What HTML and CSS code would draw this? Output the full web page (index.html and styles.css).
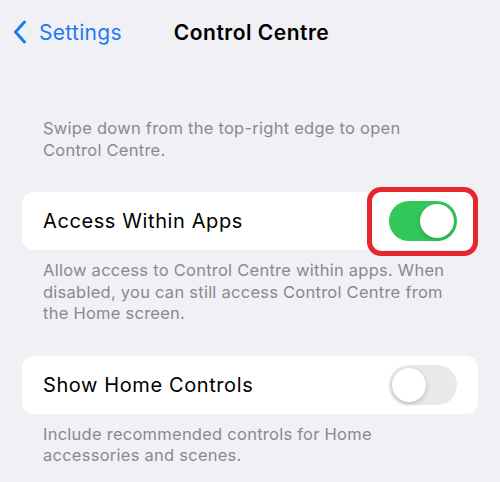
FILE: index.html
```html
<!DOCTYPE html>
<html lang="en">
<head>
    <meta charset="UTF-8">
    <meta name="viewport" content="width=device-width, initial-scale=1.0">
    <title>Control Centre</title>
    <link rel="stylesheet" href="styles.css">
</head>
<body>
    <div class="nav-bar">
        <div class="back-link">
            <svg class="chevron" width="14" height="24" viewBox="0 0 14 24">
                <path d="M11.5 2 L2.5 12 L11.5 22" fill="none" stroke="#1a7cf3" stroke-width="3" stroke-linecap="round" stroke-linejoin="round"/>
            </svg>
            <span>Settings</span>
        </div>
        <div class="nav-title">Control Centre</div>
    </div>

    <p class="group-footer first">Swipe down from the top-right edge to open Control Centre.</p>

    <div class="group-card">
        <span class="row-label">Access Within Apps</span>
        <div class="toggle-wrap">
            <div class="toggle on"><div class="knob"></div></div>
            <div class="highlight"></div>
        </div>
    </div>
    <p class="group-footer">Allow access to Control Centre within apps. When disabled, you can still access Control Centre from the Home screen.</p>

    <div class="group-card">
        <span class="row-label">Show Home Controls</span>
        <div class="toggle-wrap">
            <div class="toggle"><div class="knob"></div></div>
        </div>
    </div>
    <p class="group-footer">Include recommended controls for Home accessories and scenes.</p>
</body>
</html>
```

FILE: styles.css
```css
body {
    margin: 0;
    padding: 0;
    background: #f1f0f5;
    font-family: Inter, "Liberation Sans", Arial, sans-serif;
    color: #000;
}
.nav-bar {
    height: 64px;
    display: flex;
    align-items: center;
    position: relative;
}
.back-link {
    display: flex;
    align-items: center;
    gap: 12px;
    padding-left: 13px;
    color: #1a7cf3;
    font-size: 21px;
    letter-spacing: 0.3px;
}
.chevron {
    display: block;
}
.nav-title {
    margin-left: 52px;
    font-size: 21px;
    font-weight: 600;
    letter-spacing: 0.5px;
}
.group-footer {
    margin: 10px 0 0;
    padding: 0 43px;
    font-size: 16.5px;
    line-height: 21.5px;
    letter-spacing: 0.25px;
    color: #8a898e;
}
.group-footer.first {
    margin-top: 54px;
}
.group-card {
    margin: 31px 22px 0;
    height: 58px;
    background: #fff;
    border-radius: 12px;
    display: flex;
    align-items: center;
    justify-content: space-between;
    padding: 0 21px;
}
.row-label {
    font-size: 20px;
    letter-spacing: 0.6px;
}
.toggle-wrap {
    position: relative;
}
.toggle {
    width: 68px;
    height: 40px;
    border-radius: 20px;
    background: #e9e9eb;
    position: relative;
}
.toggle.on {
    background: #34c759;
}
.knob {
    position: absolute;
    top: 3px;
    left: 3px;
    width: 34px;
    height: 34px;
    border-radius: 50%;
    background: #fff;
    box-shadow: 0 2px 5px rgba(0, 0, 0, 0.18), 0 0 1px rgba(0, 0, 0, 0.1);
}
.toggle.on .knob {
    left: 31px;
}
.highlight {
    position: absolute;
    top: -14px;
    left: -22px;
    right: -21px;
    bottom: -15px;
    border: 5px solid #e8262d;
    border-radius: 14px;
}
```
